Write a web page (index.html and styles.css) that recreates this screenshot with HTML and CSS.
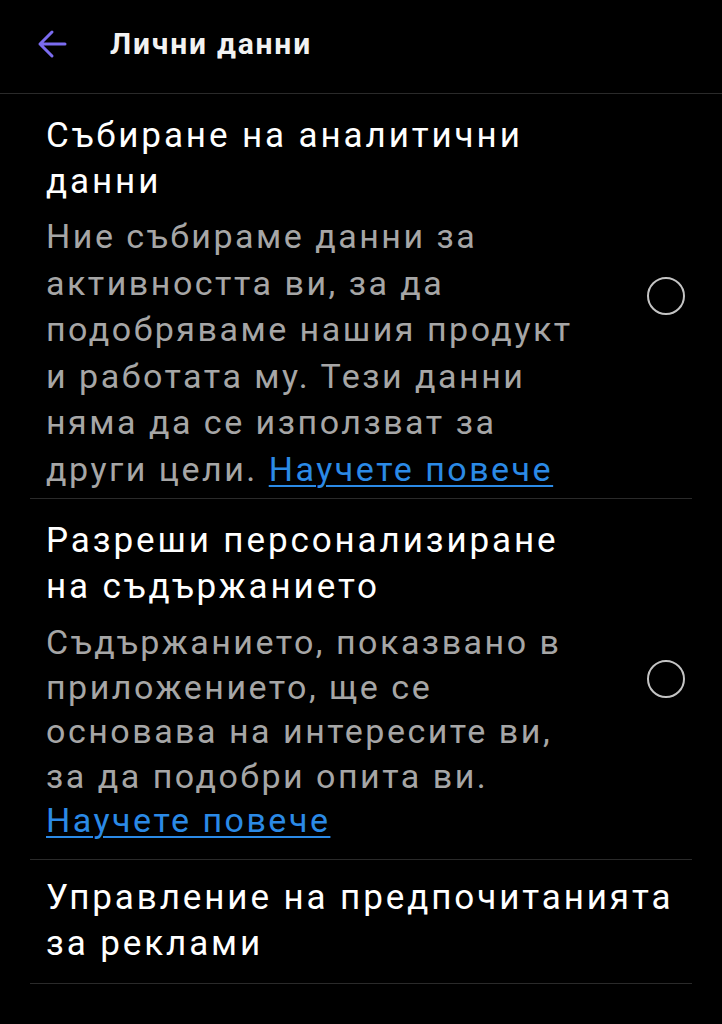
FILE: index.html
```html
<!DOCTYPE html>
<html lang="bg">
<head>
<meta charset="utf-8">
<title>Лични данни</title>
<link rel="stylesheet" href="styles.css">
</head>
<body>
<header class="topbar">
  <svg class="back" width="30" height="30" viewBox="0 0 30 30" aria-hidden="true">
    <path d="M28 15H3M15 3L3 15L15 27" fill="none" stroke="#7b6cf0" stroke-width="3" stroke-linecap="round" stroke-linejoin="round"/>
  </svg>
  <h1 class="title">Лични данни</h1>
</header>
<main class="list">
  <section class="item s1">
    <div class="text">
      <div class="item-title">Събиране на аналитични<br>данни</div>
      <div class="desc">Ние събираме данни за<br>активността ви, за да<br>подобряваме нашия продукт<br>и работата му. Тези данни<br>няма да се използват за<br>други цели. <a class="link" href="#">Научете повече</a></div>
    </div>
    <span class="radio"></span>
  </section>
  <section class="item s2">
    <div class="text">
      <div class="item-title">Разреши персонализиране<br>на съдържанието</div>
      <div class="desc">Съдържанието, показвано в<br>приложението, ще се<br>основава на интересите ви,<br>за да подобри опита ви.<br><a class="link" href="#">Научете повече</a></div>
    </div>
    <span class="radio"></span>
  </section>
  <section class="item s3">
    <div class="text">
      <div class="item-title">Управление на предпочитанията<br>за реклами</div>
    </div>
  </section>
</main>
</body>
</html>
```
FILE: styles.css
```css
html, body {
  margin: 0;
  padding: 0;
  background: #000;
}
body {
  font-family: Roboto, "Noto Sans", sans-serif;
  color: #fff;
  width: 722px;
  min-height: 1024px;
}
.topbar {
  height: 87px;
  padding-bottom: 6px;
  border-bottom: 1px solid #2a2a2a;
  display: flex;
  align-items: center;
  padding-left: 37px;
}
.back {
  display: block;
  flex: none;
}
.title {
  margin: 0 0 0 43px;
  font-size: 30px;
  font-weight: 700;
  letter-spacing: 1.8px;
  color: #f2f2f2;
}
.list {
  padding: 0 30px;
}
.item {
  display: flex;
  align-items: center;
  padding: 0 7px 0 16px;
  border-bottom: 1px solid #2a2a2a;
}
.text {
  flex: 1;
  white-space: nowrap;
  padding: 19px 0 6px;
}
.s2 .text { padding-bottom: 16px; }
.s3 .text { padding: 15px 0 16px; }
.item-title {
  font-size: 35px;
  line-height: 46px;
  letter-spacing: 2.9px;
  color: #fff;
}
.desc {
  margin-top: 8px;
  font-size: 34px;
  line-height: 46.5px;
  letter-spacing: 2.5px;
  color: #a6a6a6;
}
.s2 .desc {
  line-height: 44.5px;
  margin-top: 10px;
}
.link {
  color: #2b8ae6;
  text-decoration: underline;
  text-decoration-thickness: 2px;
  text-underline-offset: 4px;
}
.radio {
  flex: none;
  width: 34px;
  height: 34px;
  border: 2px solid #c4c4c4;
  border-radius: 50%;
}
```
